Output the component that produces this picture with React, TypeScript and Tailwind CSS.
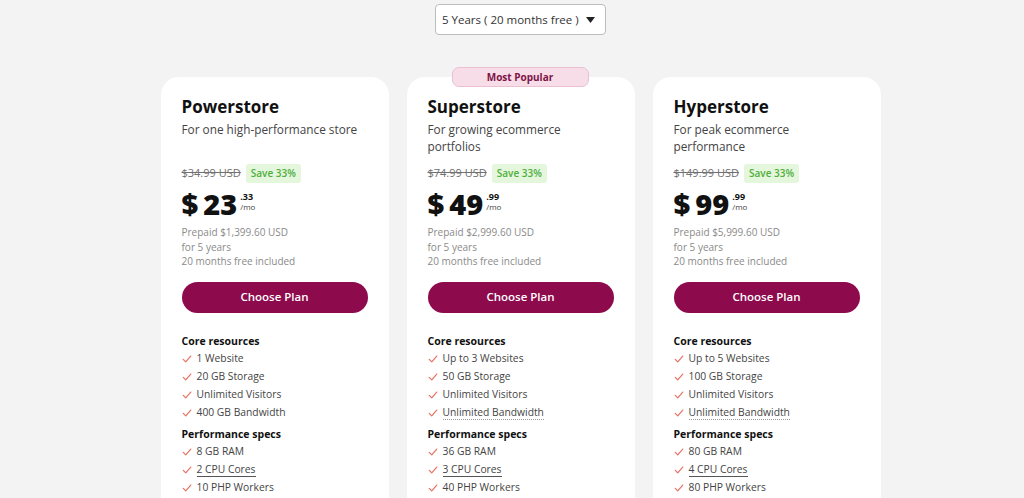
import React from "react";

interface Feature {
  text: string;
  underline?: "solid" | "dotted";
}

interface Plan {
  name: string;
  tagline: string[];
  oldPrice: string;
  dollars: string;
  cents: string;
  prepaid: string;
  popular?: boolean;
  core: Feature[];
  perf: Feature[];
}

const plans: Plan[] = [
  {
    name: "Powerstore",
    tagline: ["For one high-performance store"],
    oldPrice: "$34.99 USD",
    dollars: "23",
    cents: ".33",
    prepaid: "Prepaid $1,399.60 USD",
    core: [
      { text: "1 Website" },
      { text: "20 GB Storage" },
      { text: "Unlimited Visitors" },
      { text: "400 GB Bandwidth" },
    ],
    perf: [
      { text: "8 GB RAM" },
      { text: "2 CPU Cores", underline: "solid" },
      { text: "10 PHP Workers" },
    ],
  },
  {
    name: "Superstore",
    tagline: ["For growing ecommerce", "portfolios"],
    oldPrice: "$74.99 USD",
    dollars: "49",
    cents: ".99",
    prepaid: "Prepaid $2,999.60 USD",
    popular: true,
    core: [
      { text: "Up to 3 Websites" },
      { text: "50 GB Storage" },
      { text: "Unlimited Visitors" },
      { text: "Unlimited Bandwidth", underline: "dotted" },
    ],
    perf: [
      { text: "36 GB RAM" },
      { text: "3 CPU Cores", underline: "solid" },
      { text: "40 PHP Workers" },
    ],
  },
  {
    name: "Hyperstore",
    tagline: ["For peak ecommerce", "performance"],
    oldPrice: "$149.99 USD",
    dollars: "99",
    cents: ".99",
    prepaid: "Prepaid $5,999.60 USD",
    core: [
      { text: "Up to 5 Websites" },
      { text: "100 GB Storage" },
      { text: "Unlimited Visitors" },
      { text: "Unlimited Bandwidth", underline: "dotted" },
    ],
    perf: [
      { text: "80 GB RAM" },
      { text: "4 CPU Cores", underline: "solid" },
      { text: "80 PHP Workers" },
    ],
  },
];

function Check() {
  return (
    <svg width="10" height="10" viewBox="0 0 12 12" className="shrink-0">
      <path d="M1.5 6.5 L4.5 9.5 L10.5 2.5" fill="none" stroke="#e87466" strokeWidth="1.5" strokeLinecap="round" strokeLinejoin="round" />
    </svg>
  );
}

function FeatureRow({ f }: { f: Feature }) {
  let cls = "";
  if (f.underline === "solid") cls = "border-b border-[#555]";
  if (f.underline === "dotted") cls = "border-b border-dotted border-[#999]";
  return (
    <li className="flex h-[18px] items-center gap-[5px]">
      <Check />
      <span className={`leading-[13px] ${cls}`}>{f.text}</span>
    </li>
  );
}

function PlanCard({ plan }: { plan: Plan }) {
  return (
    <div className="relative w-[228px] rounded-[18px] bg-white px-[21px] pt-[19px]">
      {plan.popular && (
        <div className="absolute left-[45px] top-[-10px] flex h-[20px] w-[137px] items-center justify-center rounded-[7px] border border-[#ecbfd3] bg-[#f6dde8] text-[10px] font-bold text-[#7d1447]">
          Most Popular
        </div>
      )}
      <h2 className="text-[17px] font-bold leading-[22px] text-[#111]">{plan.name}</h2>
      <p className="mt-[3px] h-[34px] text-[11.8px] leading-[17px] text-[#444]">
        {plan.tagline.map((l) => (
          <span key={l} className="block">
            {l}
          </span>
        ))}
      </p>
      <div className="mt-[9px] flex items-center gap-[5px]">
        <span className="text-[11px] text-[#707070] line-through">{plan.oldPrice}</span>
        <span className="rounded-[3px] bg-[#e4f6dc] px-[5px] py-[2px] text-[10px] font-semibold text-[#4fae3d]">Save 33%</span>
      </div>
      <div className="mt-[5px] flex items-start text-[#111]">
        <span className="text-[29px] font-extrabold leading-[32px]">$</span>
        <span className="ml-[5px] text-[29px] font-extrabold leading-[32px]">{plan.dollars}</span>
        <div className="ml-[3px] mt-[4px] flex flex-col">
          <span className="text-[9px] font-bold leading-[10px]">{plan.cents}</span>
          <span className="text-[8px] leading-[10px] text-[#444]">/mo</span>
        </div>
      </div>
      <div className="mt-[5px] text-[10px] leading-[14.5px] text-[#8a8a8a]">
        <div>{plan.prepaid}</div>
        <div>for 5 years</div>
        <div>20 months free included</div>
      </div>
      <button className="mt-[13px] h-[31px] w-full rounded-full bg-[#8d0a4d] text-[11.5px] font-semibold text-white">
        Choose Plan
      </button>
      <h3 className="mt-[21px] text-[10.5px] font-bold leading-[14px] text-[#111]">Core resources</h3>
      <ul className="mt-[2px] text-[10.3px] text-[#444]">
        {plan.core.map((f) => (
          <FeatureRow key={f.text} f={f} />
        ))}
      </ul>
      <h3 className="mt-[5px] text-[10.5px] font-bold leading-[14px] text-[#111]">Performance specs</h3>
      <ul className="mt-[2px] pb-[20px] text-[10.3px] text-[#444]">
        {plan.perf.map((f) => (
          <FeatureRow key={f.text} f={f} />
        ))}
      </ul>
    </div>
  );
}

export default function App() {
  return (
    <div className="h-[498px] overflow-hidden bg-[#f3f3f3] pl-[17px]" style={{ fontFamily: '"Open Sans", "Noto Sans", sans-serif' }}>
      <div className="flex justify-center pt-[4px]">
        <div className="flex h-[31px] w-[171px] items-center justify-between whitespace-nowrap rounded-[4px] border border-[#bdbdbd] bg-white pl-[6px] pr-[10px] text-[11.5px] text-[#333]">
          <span>5 Years ( 20 months free )</span>
          <svg width="9" height="6" viewBox="0 0 9 6" className="shrink-0">
            <path d="M0 0 H9 L4.5 6 Z" fill="#222" />
          </svg>
        </div>
      </div>
      <div className="mt-[42px] flex justify-center gap-[18px]">
        {plans.map((p) => (
          <PlanCard key={p.name} plan={p} />
        ))}
      </div>
    </div>
  );
}
